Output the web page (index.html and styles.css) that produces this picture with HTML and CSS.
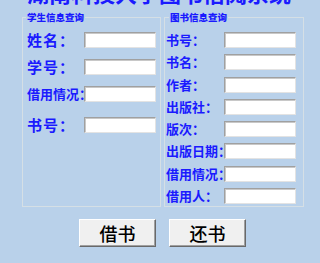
FILE: index.html
```html
<!DOCTYPE html>
<html lang="zh-CN">
<head>
<meta charset="utf-8">
<link rel="stylesheet" href="styles.css">
</head>
<body>
<div class="title">湖南科技大学图书借阅系统</div>
<div class="groups">
  <div class="group group-student">
    <span class="legend">学生信息查询</span>
    <div class="rows rows-student">
      <div class="row"><span class="label big">姓名：</span><span class="input"></span></div>
      <div class="row"><span class="label big">学号：</span><span class="input"></span></div>
      <div class="row"><span class="label">借用情况：</span><span class="input"></span></div>
      <div class="row row-last"><span class="label big">书号：</span><span class="input"></span></div>
    </div>
  </div>
  <div class="group group-book">
    <span class="legend">图书信息查询</span>
    <div class="rows rows-book">
      <div class="row"><span class="label">书号：</span><span class="input"></span></div>
      <div class="row"><span class="label">书名：</span><span class="input"></span></div>
      <div class="row"><span class="label">作者：</span><span class="input"></span></div>
      <div class="row"><span class="label">出版社：</span><span class="input"></span></div>
      <div class="row"><span class="label">版次：</span><span class="input"></span></div>
      <div class="row"><span class="label">出版日期：</span><span class="input"></span></div>
      <div class="row"><span class="label">借用情况：</span><span class="input"></span></div>
      <div class="row"><span class="label">借用人：</span><span class="input"></span></div>
    </div>
  </div>
</div>
<div class="buttons">
  <button class="btn">借书</button>
  <button class="btn">还书</button>
</div>
</body>
</html>
```
FILE: styles.css
```css
html, body {
  margin: 0;
  padding: 0;
}
body {
  width: 320px;
  height: 263px;
  overflow: hidden;
  background: #b9d1ea;
  font-family: "Noto Sans CJK SC", "Noto Sans", sans-serif;
}
.title {
  margin-top: -20px;
  height: 24px;
  line-height: 24px;
  padding-left: 27px;
  font-size: 22px;
  font-weight: bold;
  color: #1a1aff;
  white-space: nowrap;
}
.groups {
  display: flex;
  gap: 3px;
  margin-top: 13px;
  padding-left: 22px;
}
.group {
  position: relative;
  box-sizing: border-box;
  height: 190px;
  border: 1px solid #d5dfe5;
}
.group-student {
  width: 139px;
  padding: 14px 3px 0 4px;
}
.group-book {
  width: 140px;
  padding: 14px 0 0 1px;
}
.legend {
  position: absolute;
  top: -7px;
  left: 3px;
  padding: 0 1px;
  background: #b9d1ea;
  font-size: 9.5px;
  line-height: 12px;
  font-weight: 900;
  color: #1a1aff;
  white-space: nowrap;
}
.group-book .legend {
  left: 4px;
}
.rows {
  display: grid;
  grid-auto-rows: 16px;
}
.rows-student {
  row-gap: 11px;
}
.rows-student .row-last {
  margin-top: 4px;
}
.rows-book {
  row-gap: 6.3px;
}
.row {
  display: flex;
  align-items: center;
  height: 16px;
}
.label {
  flex: none;
  width: 57px;
  font-size: 13px;
  line-height: 16px;
  font-weight: bold;
  color: #1a1aff;
  white-space: nowrap;
}
.label.big {
  font-size: 15px;
  letter-spacing: 1px;
}
.rows-book .label {
  width: 58px;
}
.input {
  box-sizing: border-box;
  width: 72px;
  height: 16px;
  background: #fff;
  border: 1px solid;
  border-color: #a0a0a0 #e3e3e3 #e3e3e3 #a0a0a0;
  box-shadow: inset 1px 1px 0 #c8c8c8;
}
.buttons {
  display: flex;
  gap: 13px;
  margin-top: 12px;
  padding-left: 79px;
}
.btn {
  box-sizing: border-box;
  width: 77px;
  height: 28px;
  padding: 0;
  background: #f0f0f0;
  border: 1px solid;
  border-color: #ffffff #696969 #696969 #ffffff;
  box-shadow: inset -1px -1px 0 #a0a0a0;
  font-family: "Noto Sans CJK SC", sans-serif;
  font-size: 18px;
  font-weight: 500;
  line-height: 26px;
  color: #000;
}
```
